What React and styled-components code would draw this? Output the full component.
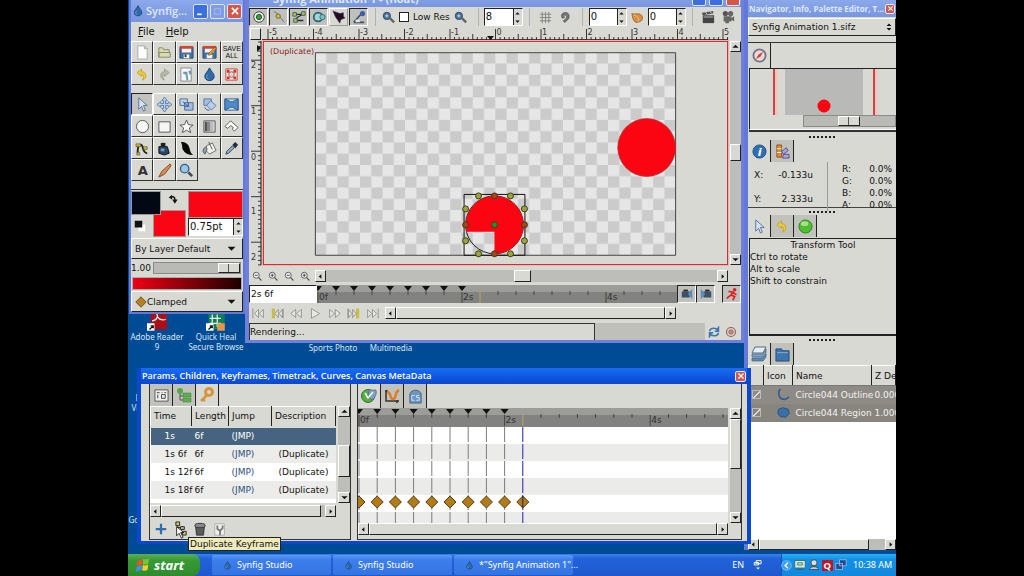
import React, { useState } from "react";
import styled, { createGlobalStyle, css } from "styled-components";

const GlobalStyle = createGlobalStyle`
    * {
        box-sizing: border-box;
    }

    body {
        margin: 0;
        background: #000;
        color: #111;
        font-family: "DejaVu Sans", "Noto Sans", sans-serif;
        font-size: 9px;
        line-height: 12px;
        overflow: hidden;
    }

    button, input, select {
        margin: 0;
        padding: 0;
        border: 0;
        border-radius: 0;
        background: none;
        color: inherit;
        font: inherit;
    }

    svg {
        display: block;
        flex: none;
    }
`

const raised = css`
    border: 1px solid;
    border-color: #fff #222 #222 #fff;
`

const sunken = css`
    border: 1px solid;
    border-color: #222 #fff #fff #222;
`

const Desktop = styled.main`
    position: relative;
    width: 75%;
    height: 100vh;
    margin: 0 auto;
    overflow: hidden;
    background: #004b96;
`

const Frame = styled.section`
    position: absolute;
    display: flex;
    flex-direction: column;
    background: #d9d9d3;
    overflow: hidden;
`

const ToolboxFrame = styled(Frame)`
    left: 1px;
    top: 0;
    width: 116px;
    border: solid #6478d8;
    border-width: 0 2px 2px;
`

const CanvasFrame = styled(Frame)`
    left: 117px;
    top: -9px;
    width: 500px;
    border: solid #6e80da;
    border-width: 0 4px 3px;
`

const DocksFrame = styled(Frame)`
    left: 616px;
    right: 0;
    top: 0;
    border-left: 4px solid #6478d8;
    white-space: nowrap;
`

const ParamsFrame = styled(Frame)`
    left: 9px;
    top: 368px;
    width: 614px;
    border: solid #0c47cf;
    border-width: 0 4px 3px;
`

const TitleBar = styled.header`
    display: flex;
    align-items: center;
    gap: ${(props) => props.$gap || 2}px;
    height: ${(props) => props.$height}px;
    flex: none;
    padding: 0 1px;
    color: ${(props) => (props.$active ? "#fff" : "#dfe8ff")};
    background: ${(props) => (props.$active ? "linear-gradient(#1a6cf4, #0b52dc 70%, #0c48cc)" : "linear-gradient(#8ba8ea, #7896e0)")};
    font-family: "Open Sans", "Noto Sans", sans-serif;
    font-size: ${(props) => props.$size || 9}px;
    font-weight: ${(props) => props.$weight || 700};
    line-height: 16px;
    white-space: nowrap;

    & h1 {
        flex: 1;
        margin: 0;
        font: inherit;
    }
`

const TitleButton = styled.button`
    display: grid;
    place-items: center;
    flex: none;
    width: ${(props) => props.$size || 15}px;
    height: ${(props) => props.$size || 15}px;
    border: 1px solid #dfe6fa;
    border-radius: 2px;
    color: #fff;
    background: ${(props) => (props.$close ? "#d2584a" : props.$dim ? "#7f9ce4" : "#3b6fe0")};
`

const Row = styled.div`
    display: flex;
    align-items: center;
`

const KeyframeActions = styled(Row)`
    padding-top: 3px;
`

const MenuBar = styled.nav`
    display: flex;
    gap: 11px;
    height: 19px;
    padding: 4px 7px;
    font-size: 10px;

    & button::first-letter {
        text-decoration: underline;
    }
`

const ToolGrid = styled.div`
    display: grid;
    grid-template-columns: repeat(5, 1fr);
    margin-bottom: ${(props) => props.$below || 0}px;
`

const ToolButton = styled.button`
    display: grid;
    place-items: center;
    height: 22px;
    border: 1px solid;
    border-color: ${(props) => (props.$on ? "#222 #fff #fff #222" : "#fff #333 #333 #fff")};
    background: ${(props) => (props.$on ? "#c2c2be" : "#d9d9d3")};
`

const SaveAll = styled.span`
    font-family: "Liberation Sans", sans-serif;
    font-size: 7px;
    line-height: 7px;
`

const ColorArea = styled.div`
    display: grid;
    grid-template-columns: 55px minmax(0, 1fr);
    gap: 2px;
    padding: 1px 0;
    border-top: 1px solid #333;
`

const Swatches = styled.div`
    display: grid;
    grid-template-columns: 22px 8px 25px;
    grid-template-rows: 19px 7px 20px;
`

const Swatch = styled.button`
    grid-area: ${(props) => props.$area};
    z-index: ${(props) => (props.$front ? 1 : 0)};
    height: ${(props) => props.$height || "auto"};
    border: 1px solid #999;
    background: ${(props) => props.$fill};
`

const Spin = styled.div`
    display: flex;
    width: ${(props) => (props.$width ? props.$width + "px" : "100%")};
    height: 18px;
    background: #fff;
    ${sunken}

    & input {
        flex: 1;
        min-width: 0;
        padding-left: 1px;
        font-size: 10px;
    }

    & div {
        display: grid;
        flex: none;
        width: 9px;
        background: #d9d9d3;
        border-left: 1px solid #222;
    }

    & button {
        display: grid;
        place-items: center;
    }
`

const Combo = styled.div`
    display: grid;
    grid-template-columns: auto 1fr 15px;
    align-items: center;
    height: 21px;
    padding-left: 3px;
    ${raised}

    & select {
        appearance: none;
        min-width: 0;
        outline: 0;
    }

    & svg {
        pointer-events: none;
    }
`

const OpacityRow = styled.label`
    display: grid;
    grid-template-columns: 22px 1fr;
    align-items: center;
    height: 18px;
    padding-right: 2px;
`

const Range = styled.input`
    appearance: none;
    display: block;
    width: 100%;
    height: 12px;
    background: #b9b9b5;
    border: 1px solid #8a8a86;

    &::-webkit-slider-thumb {
        appearance: none;
        width: 22px;
        height: 10px;
        border: 1px solid;
        border-color: #fff #222 #222 #fff;
        background: linear-gradient(90deg, #d9d9d3 9px, #555 9px, #555 10px, #d9d9d3 10px);
    }
`

const GradientButton = styled.button`
    height: 13px;
    margin: 0 1px 1px;
    border: 1px solid #aaa;
    background: linear-gradient(90deg, #f00013, #1c0000);
`

const Toolbar = styled.div`
    display: flex;
    align-items: center;
    height: 20px;
    gap: 1px;
    white-space: nowrap;
`

const Group = styled.div`
    display: flex;
    align-items: center;
    gap: ${(props) => props.$gap || 0}px;
    margin-left: ${(props) => props.$before || 0}px;
    padding-left: ${(props) => props.$inset || 0}px;
    height: 18px;
    border-left: 1px solid #b0b0ac;
`

const Toggle = styled.button`
    display: grid;
    place-items: center;
    width: 19px;
    height: 18px;
    background: ${(props) => (props.$off ? "#d9d9d3" : "#c0c0bc")};
    border: 1px solid;
    border-color: ${(props) => (props.$off ? "#fff #999 #999 #fff" : "#222 #fff #fff #222")};
`

const PlainButton = styled.button`
    display: grid;
    place-items: center;
    width: ${(props) => props.$width || 17}px;
    height: 17px;
`

const Check = styled.label`
    display: flex;
    align-items: center;
    gap: 4px;

    & input {
        appearance: none;
        width: 10px;
        height: 10px;
        border: 1px solid #222;
        background: #fff;
    }
`

const CanvasGrid = styled.div`
    display: grid;
    grid-template-columns: 13px 1fr 13px;
    grid-template-rows: 14px 224px;
    padding-bottom: 2px;

    & > svg {
        overflow: visible;
    }
`

const CornerButton = styled.button`
    margin: 1px;
    ${raised}
`

const WorkArea = styled.div`
    border: 1px solid #d23038;
    background: #d9d9d3;
    box-shadow: 0 0 0 1px #e9b4b0;
    margin-left: 1px;

    & svg {
        width: 100%;
        height: 222px;
    }
`

const Track = styled.div`
    display: flex;
    flex-direction: ${(props) => (props.$vertical ? "column" : "row")};
    flex: ${(props) => (props.$width ? "none" : "1")};
    width: ${(props) => (props.$width ? props.$width + "px" : "auto")};
    margin: ${(props) => (props.$vertical ? "0 0 0 2px" : "0")};
    min-height: 11px;
    background: #bdbdb9;
`

const ArrowButton = styled.button`
    display: grid;
    place-items: center;
    flex: 0 0 11px;
    background: #d9d9d3;
    ${raised}
`

const Thumb = styled.div`
    flex: ${(props) => props.$size};
    background: #d9d9d3;
    ${raised}
`

const Space = styled.div`
    flex: ${(props) => props.$size};
`

const TimeEntry = styled.input`
    width: 68px;
    height: 18px;
    padding-left: 1px;
    background: #fff;
    ${sunken}
`

const TimeStrip = styled.div`
    flex: 1;
    height: ${(props) => props.$height || 18}px;
    overflow: hidden;
    background: linear-gradient(#9c9c98 7px, #828280 7px);

    & svg {
        width: 100%;
    }
`

const StatusBar = styled.footer`
    display: grid;
    grid-template-columns: 346px 1fr 36px;
    height: 17px;
`

const StatusText = styled.output`
    padding-top: 2px;
    border: solid #333;
    border-width: 1px 1px 0 1px;
`

const Progress = styled.div`
    background: #c0c0bb;
`

const DocSelect = styled(Combo)`
    grid-template-columns: 1fr 10px;
    height: 18px;
    margin: 1px 0 6px;
`

const TabRow = styled.div`
    display: flex;
    height: ${(props) => props.$height || 22}px;
    border-top: ${(props) => (props.$line ? "1px solid #333" : "0")};
`

const Tab = styled.button`
    display: grid;
    place-items: center;
    width: 23px;
    background: ${(props) => (props.$on ? "#d9d9d3" : "#c2c2bd")};
    border-right: 1px solid #222;
`

const Grip = styled.div`
    width: 26px;
    height: 7px;
    margin: 0 auto;
    background: linear-gradient(90deg, #222 2px, transparent 2px) 0 3px / 4px 2px repeat-x;
`

const Preview = styled.div`
    height: 62px;
    border: solid #222;
    border-width: 1px 0 1px 1px;
    border-bottom-color: #fff;
    box-shadow: 0 2px #333;
    margin: 0 0 3px 1px;

    & svg {
        width: 100%;
        height: 46px;
    }

    & label {
        display: block;
        padding-left: 53px;
    }
`

const InfoPanel = styled.dl`
    display: grid;
    grid-template-columns: 80px 1fr;
    height: 46px;
    margin: 0;
    border-bottom: 1px solid #444;
`

const Readings = styled.div`
    display: grid;
    grid-template-columns: 1fr auto;
    align-content: start;
    row-gap: ${(props) => (props.$wide ? 12 : 0)}px;
    padding: ${(props) => (props.$wide ? "7px 14px 0 6px" : "1px 4px 0 14px")};
    border-right: ${(props) => (props.$wide ? "1px solid #999" : "0")};

    & dd {
        margin: 0;
        text-align: right;
    }
`

const ToolHelp = styled.div`
    height: 98px;
    margin: 1px 0 0 1px;
    border: solid #222;
    border-width: 1px 0 2px 1px;

    & h2 {
        margin: 0;
        font: inherit;
        text-align: center;
    }

    & p {
        margin: 0;
    }
`

const LayerArea = styled.div`
    height: 174px;
    background: #fff;
`

const DataTable = styled.table`
    width: 100%;
    border-collapse: collapse;
    table-layout: fixed;
    white-space: nowrap;

    & th {
        height: 20px;
        padding: 0 0 0 3px;
        background: #d9d9d3;
        border: 1px solid;
        border-color: #fff #222 #777 #fff;
        font-weight: 400;
        text-align: left;
    }

    & td {
        height: 18px;
        padding: 0 0 0 3px;
    }
`

const LayerTable = styled(DataTable)`
    & td {
        color: #f2f2ee;
        background: #8e8b86;
    }

    & tr:nth-child(2) td {
        background: #88857f;
    }

    & td:nth-child(2) svg {
        margin: 0 3px 0 auto;
    }

    & input {
        appearance: none;
        display: block;
        width: 9px;
        height: 9px;
        border: 1px solid #bbb;
        background: linear-gradient(135deg, transparent 45%, #ddd 45%, #ddd 60%, transparent 60%);
    }
`

const KeyframeTable = styled(DataTable)`
    & thead tr {
        border-bottom: 2px solid #d9d9d3;
    }

    & tbody tr:nth-child(even) {
        background: #ececea;
    }

    & tbody tr:first-child {
        color: #fff;
        background: #46647f;
    }

    & td:first-child {
        padding-left: 14px;
    }

    & td:last-child {
        padding-left: 7px;
    }

    & a {
        color: #2b5080;
        text-decoration: none;
    }

    & tr:first-child a {
        color: #fff;
    }
`

const Panels = styled.div`
    display: grid;
    grid-template-columns: 202px 1fr;
    gap: 6px;
    padding: 0 5px 1px 8px;
`

const Panel = styled.section`
    display: flex;
    flex-direction: column;
    height: 156px;
    border: solid #333;
    border-width: 0 1px 1px 1px;
`

const Split = styled.div`
    display: flex;
    height: ${(props) => props.$height}px;
`

const Body = styled.div`
    flex: 1;
    min-width: 0;
    background: #fff;
`

const TrackRows = styled.div`
    height: 96px;
    background: repeating-linear-gradient(#fff 0 17px, #ebebe9 17px 34px);

    & svg {
        width: 100%;
        height: 96px;
    }
`

const Tooltip = styled.div`
    position: absolute;
    left: 60px;
    top: 537px;
    padding: 0 1px;
    border: 1px solid #222;
    background: #efebbb;
    white-space: nowrap;
`

const Pointer = styled.div`
    position: absolute;
    left: 47px;
    top: 526px;
`

const Shortcut = styled.a`
    position: absolute;
    left: ${(props) => props.$x}px;
    top: ${(props) => props.$y}px;
    display: grid;
    justify-items: center;
    width: 64px;
    color: #dbe8f6;
    font-family: "Noto Sans", sans-serif;
    font-size: 8px;
    line-height: 10px;
    text-align: center;
    text-decoration: none;
    white-space: nowrap;
`

const Taskbar = styled.footer`
    position: absolute;
    left: 0;
    right: 0;
    bottom: 0;
    display: grid;
    grid-template-columns: 72px 1fr auto 111px;
    gap: 0 12px;
    align-items: stretch;
    height: 22px;
    color: #fff;
    background: linear-gradient(#3b82ee, #2262da 20%, #1f58ce);
    font-family: "Noto Sans", sans-serif;
`

const StartButton = styled.button`
    display: flex;
    align-items: center;
    gap: 4px;
    padding-left: 8px;
    border-radius: 0 8px 8px 0;
    background: linear-gradient(#5cae55, #379a35 30%, #2f8b2e);
    font-size: 13px;
    font-style: italic;
    font-weight: 700;
`

const Tasks = styled.div`
    display: grid;
    grid-template-columns: repeat(3, 119px);
    gap: 2px;
    padding: 1px 0;

    & button {
        display: flex;
        align-items: center;
        gap: 5px;
        padding-left: 11px;
        border-radius: 2px;
        background: linear-gradient(#5a98f6, #3c7eec 25%, #3474e2);
        white-space: nowrap;
    }
`

const Language = styled.div`
    display: flex;
    align-items: center;
    gap: 9px;
    padding-right: 10px;
`

const Tray = styled.div`
    display: flex;
    align-items: center;
    gap: 2px;
    margin-left: -4px;
    background: linear-gradient(#2fb0f4, #1290e6 25%, #1488dc);
    box-shadow: inset 1px 0 #0d59b5;

    & time {
        margin-left: 4px;
        white-space: nowrap;
    }
`

const art = {
    page: <path d="M3 1h7l3 3v11H3zM10 1v3h3" fill="#fdfdfb" stroke="#aaa" />,
    folder: <path d="M2 13V3h4l1 2h6v3M2 13V8h12v5z" fill="#d9dcb2" stroke="#858863" />,
    save: <><path d="M1 2h14v12H1z" fill="#466f9e" stroke="#294d78" /><path d="M1 1h14v3H1z" fill="#d14532" /><path d="M3 4h10v4H3zM5 10h6v4H5z" fill="#f5f5f5" /><path d="M6 10h2v3H6z" fill="#333" /></>,
    saveAs: <><path d="M1 2h14v12H1z" fill="#466f9e" stroke="#294d78" /><path d="M1 1h14v3H1z" fill="#d14532" /><path d="M3 4h10v4H3zM5 10h6v4H5z" fill="#f5f5f5" /><path d="M14 2 8 8l-1 3 3-1 5-6z" fill="#df9a38" stroke="#814714" strokeWidth=".6" /></>,
    undo: <path d="M8 14c5-1 5-9-1-9V2L2 6l5 4V8c2 0 3 3 1 6z" fill="#eccc30" stroke="#b79718" strokeWidth=".7" />,
    redo: <path d="M8 14C2 12 3 5 8 5V2l5 4-5 4V8c-2 0-3 3 0 6z" fill="#b5bfa8" stroke="#88907e" strokeWidth=".7" />,
    pageTool: <><path d="M2 1h11v14H2z" fill="#f7f7f7" stroke="#889" /><path d="M5 5h4v2l1 7H8L7 8 4 7zM10 4h3v4h-2z" fill="#6c9cae" /></>,
    drop: <><path d="M8 1c2 4 5 6 5 9 0 6-10 6-10 0 0-3 3-5 5-9z" fill="#2f69a9" stroke="#173f70" /><path d="M6 8c-2 3-1 4 1 5" stroke="#7aa8d8" /></>,
    buoy: <><path d="M2 2h12v12H2z" fill="#fbf4f0" stroke="#c8453a" /><path d="M3 3h3v3H3zM10 3h3v3h-3zM3 10h3v3H3zM10 10h3v3h-3z" fill="#cf3427" /><circle cx="8" cy="8" r="3" fill="#d9d9d3" stroke="#c8453a" /></>,
    pointer: <path d="M4 1v12l3-3 2 5 2-1-2-5h4z" fill="#d7e3f3" stroke="#54729c" />,
    move: <path d="M8 0l3 4H9v3h3V5l4 3-4 3V9H9v3h2l-3 4-3-4h2V9H4v2L0 8l4-3v2h3V4H5z" fill="#bcd2ee" stroke="#3f6a9f" strokeWidth=".8" />,
    scale: <><path d="M1 2h8v7H1z" fill="#c3d4ea" stroke="#4a6d9e" /><path d="M6 6h9v8H6z" fill="#a5bedc" stroke="#4a6d9e" /><path d="M4 5l6 5m0-4v4H6" stroke="#34578a" fill="none" /></>,
    rotate: <><path d="M2 2h8v7H2z" fill="#a5bedc" stroke="#5a7bab" /><path d="M9 4l6 5-5 5-5-5z" fill="#b7cce6" stroke="#5a7bab" /><path d="M3 11c1 3 3 3 5 3" stroke="#34578a" fill="none" /></>,
    mirror: <><path d="M1 2h14v12H1z" fill="#d5e3f2" stroke="#315d91" /><path d="M1 2l6 3h2l6-3v12l-6-3H7l-6 3z" fill="#4e8bc8" stroke="#315d91" /></>,
    circle: <circle cx="8" cy="8" r="6.500" fill="#f6f6f6" stroke="#555" />,
    square: <path d="M2 3h12v11H2z" fill="#f6f6f6" stroke="#555" />,
    star: <path d="M8 1l2 5 5 .5-4 3 1.500 5L8 12l-4.500 2.500L5 9.500l-4-3L6 6z" fill="#fbfbfb" stroke="#555" />,
    gradient: <><path d="M2 2h12v12H2z" fill="#ddd" stroke="#555" /><path d="M3 3h3v10H3z" fill="#555" /><path d="M6 3h3v10H6z" fill="#888" /><path d="M9 3h3v10H9z" fill="#bbb" /></>,
    polygon: <path d="M1 8l6-6 8 7-4 4-2-2 1-2-3-2-3 3z" fill="#fff" stroke="#555" />,
    spline: <><path d="M3 14C2 3 7 2 8 6c1 5 2 7 5 7" fill="none" stroke="#222" strokeWidth="2" /><path d="M1 3h5v3H1zM9 6h4v3H9zM2 12h3v3H2z" fill="#cbb528" stroke="#333" strokeWidth=".5" /></>,
    ink: <><path d="M4 2h5v4H4z" fill="#222" /><path d="M2 6h9l2 7-5 2-6-2z" fill="#28466a" stroke="#111" /><path d="M4 8h4v3H4z" fill="#7799bd" /></>,
    feather: <path d="M2 1c5 0 8 2 9 6 1 4 1 5 4 8-5 0-9-2-11-6C3 6 4 5 2 1z" fill="#090909" />,
    bucket: <><path d="M5 5l6-3 4 8-7 4-4-4z" fill="#f1f1ef" stroke="#666" /><path d="M7 1l4 8M2 8c2-3 4-1 3 2l-2 4-2-3z" fill="#8da4b9" stroke="#555" /></>,
    dropper: <><path d="M9 4l3-3 3 3-3 4z" fill="#222d3d" /><path d="M9 5l2 2-6 6-3 1 1-3z" fill="#91acc4" stroke="#34485e" /></>,
    letter: <text x="3" y="13" fill="#333" fontSize="14" fontWeight="700">A</text>,
    pencil: <path d="M14 1l-9 8-3 6 6-3 7-9z" fill="#d88c50" stroke="#814a27" />,
    lens: <><circle cx="6" cy="6" r="4.500" fill="#9dc5e6" stroke="#375f8b" strokeWidth="1.500" /><path d="M10 10l4 4" stroke="#434c58" strokeWidth="3" /></>,
    swap: <path d="M1 5l5-4v2c4 0 5 2 5 5h3l-4 6-4-6h3c0-2-1-3-3-3v3z" fill="#161616" />,
    reset: <><path d="M6 6h9v9H6z" fill="#fff" /><path d="M1 1h10v9H1z" fill="#111" /></>,
    diamond: <path d="M8 1l7 7-7 7-7-7z" fill="#b58122" stroke="#5b3b0e" />,
    target: <><circle cx="8" cy="8" r="6" fill="#eee" stroke="#333" /><circle cx="8" cy="8" r="3" fill="#3a9e3c" stroke="#145217" /></>,
    tangent: <><path d="M2 2c5 1 6 5 12 12" fill="none" stroke="#666" /><circle cx="7" cy="7" r="2.500" fill="#cbbd48" stroke="#6b6426" /></>,
    vertex: <><path d="M3 5h9C9 8 4 7 5 12h8" fill="none" stroke="#1f3045" strokeWidth="1.500" /><path d="M1 3h4v4H1zM11 2h4v4h-4zM2 10h4v4H2z" fill="#c8c24b" stroke="#2e5a50" /></>,
    radius: <><circle cx="7" cy="8" r="5" fill="#a4d6d5" stroke="#25656d" strokeWidth="2" /><circle cx="12" cy="8" r="3" fill="#86bfc4" stroke="#25656d" /></>,
    widthHandle: <path d="M1 1l8 3 4-1v4l2 2-5 2-1 4-5-7z" fill="#1c1020" stroke="#612c60" strokeWidth=".7" />,
    angle: <><path d="M2 14h12M2 14L11 4" stroke="#445066" strokeWidth="2" /><circle cx="12" cy="4" r="3" fill="#3e5fa8" /><path d="M4 11h5v3H4z" fill="#dfe3ea" /></>,
    refine: <><circle cx="6" cy="6" r="4.500" fill="#4d7296" stroke="#263f5b" /><path d="M10 9l5 5" stroke="#60666b" strokeWidth="3" /><path d="M4 6h4M6 4v4" stroke="#dce7f2" /></>,
    grid: <path d="M1 4h14M1 8h14M1 12h14M4 1v14M8 1v14M12 1v14" stroke="#777" fill="none" />,
    magnet: <path d="M4 9C0 2 10 0 12 4c2 5-2 8-5 10l-2-2c4-2 5-5 4-6-2-2-4-1-2 2z" fill="#777" stroke="#444" strokeWidth=".7" />,
    onion: <><path d="M1 3c6 2 10-2 13 4 1 5-3 7-8 7-4-2-4-7-5-11z" fill="#d69045" stroke="#9b5e25" /><path d="M3 5c4 1 8 3 6 8" stroke="#f0c68c" /></>,
    clap: <><path d="M2 6h13v9H2z" fill="#444" /><path d="M1 3l13-2v3L2 6z" fill="#555" /><path d="M5 2l2 3M10 1l2 3M3 8h11" stroke="#ccc" /></>,
    camera: <><circle cx="5" cy="4" r="3" fill="#555" /><circle cx="11" cy="4" r="3" fill="#666" /><path d="M3 7h9v6H3zM12 9l3-2v6l-3-2zM5 13h4v2H5z" fill="#666" /></>,
    zoomOut: <><circle cx="7" cy="7" r="4" fill="#eee" stroke="#555" strokeWidth="1.200" /><path d="M10 10l4 4M5 7h4" stroke="#555" strokeWidth="1.500" /></>,
    zoomIn: <><circle cx="7" cy="7" r="4" fill="#eee" stroke="#555" strokeWidth="1.200" /><path d="M10 10l4 4M5 7h4M7 5v4" stroke="#555" strokeWidth="1.500" /></>,
    lockPast: <><path d="M2 5h9v7H2z" fill="#3d5066" /><path d="M4 3h5v2H4z" fill="#222" /><path d="M14 2v12L9 8z" fill="#5b8bbb" /></>,
    lockFuture: <><path d="M5 5h9v7H5z" fill="#3d5066" /><path d="M7 3h5v2H7z" fill="#222" /><path d="M2 2v12l5-6z" fill="#5b8bbb" /></>,
    runner: <><circle cx="11" cy="3" r="2" fill="#e02020" /><path d="M10 5L7 9l4 2-2 4M7 9l-5 4M4 5l5 1 4 3" stroke="#e02020" strokeWidth="2" fill="none" /></>,
    refresh: <path d="M2 7c1-5 8-5 10-2l2-3v5H9M14 9c-1 5-8 5-10 2l-2 3V9h5" fill="none" stroke="#3d77b1" strokeWidth="2" />,
    stop: <><circle cx="8" cy="8" r="6" fill="#ddd0c8" stroke="#8f625a" strokeWidth="1.500" /><circle cx="8" cy="8" r="3" fill="#b98d84" stroke="#9a6158" /></>,
    compass: <><circle cx="8" cy="8" r="6.500" fill="#ecdad6" stroke="#75758a" strokeWidth="2" /><path d="M12 4L9 9l-5 3 3-5z" fill="#ce3d35" /></>,
    info: <><circle cx="8" cy="8" r="7" fill="#2f70b5" stroke="#1f4f86" /><text x="6" y="13" fill="#fff" fontSize="12" fontStyle="italic" fontWeight="700">i</text></>,
    palette: <><path d="M2 1h5v13H2z" fill="#e48b2d" stroke="#8d5124" /><path d="M2 5h5M2 9h5" stroke="#fff" /><path d="M7 8l5-4 2 3-5 4zM9 11h6v4H8z" fill="#a9a8cc" stroke="#5a4a90" /></>,
    ball: <><circle cx="8" cy="8" r="7" fill="#50bd35" stroke="#2c8420" /><ellipse cx="7" cy="5" rx="4" ry="2.500" fill="#a6e47f" /></>,
    layers: <><path d="M4 1h11l-3 6H1z" fill="#e8eef5" stroke="#526c88" /><path d="M1 8h11l3-5v4l-3 4H1z" fill="#7fa2c5" stroke="#45617e" strokeWidth=".7" /><path d="M1 12h11l3-4v3l-3 4H1z" fill="#5f88b2" stroke="#45617e" strokeWidth=".7" /></>,
    blueFolder: <><path d="M1 2h6l1 2h7v11H1z" fill="#3e75ad" stroke="#244c79" /><path d="M2 6h12" stroke="#86aed4" /></>,
    outline: <path d="M4 1C0 7 3 14 9 14c3 0 4-2 6-3" fill="none" stroke="#325d8e" strokeWidth="2" />,
    region: <path d="M2 4l5-2 7 2 1 5-4 5-7-1-3-4z" fill="#386fa8" stroke="#234e7f" />,
    params: <><path d="M1 2h14v12H1z" fill="#eee" stroke="#555" /><path d="M3 5h3M8 5h1M11 5h2M4 7v4M8 7h4v4H8z" stroke="#444" fill="none" /></>,
    children: <><circle cx="4" cy="4" r="3" fill="#56a846" /><path d="M4 7v6h4M4 9h3" stroke="#555" fill="none" /><path d="M7 6h8v4H7zM7 11h8v4H7z" fill="#5fad4e" stroke="#397d30" strokeWidth=".5" /></>,
    key: <><circle cx="10" cy="5" r="3.500" fill="none" stroke="#d9943b" strokeWidth="3" /><path d="M8 8l-6 6M4 12l2 2" stroke="#d9943b" strokeWidth="2.500" /></>,
    clock: <><circle cx="7" cy="8" r="6.500" fill="#55ae3d" stroke="#376c48" /><path d="M8 2h7c1 4-1 8-4 10L7 8z" fill="#7f9fc4" stroke="#4a6583" strokeWidth=".7" /><path d="M4 5l3 5 5-6" stroke="#fff" strokeWidth="1.500" fill="none" /></>,
    curve: <><path d="M2 2v11h13M1 3h3M13 12v3" stroke="#333" strokeWidth="1.500" fill="none" /><path d="M3 4c5 0 2 7 6 7 4 0 1-7 6-9" stroke="#df7c29" strokeWidth="2.500" fill="none" /></>,
    meta: <><path d="M2 15V5c2-5 10-5 12 0v10z" fill="#6b97c1" stroke="#3f6489" /><path d="M7 7H4v5h3M12 7H9v2h3v3H9" stroke="#d4e4f4" fill="none" /></>,
    plus: <path d="M8 1v14M1 8h14" stroke="#326eaf" strokeWidth="3" />,
    duplicate: <><path d="M4 3v10h6M4 7h4" stroke="#222" fill="none" /><path d="M2 1h4v4H2zM7 6h4v3H7zM9 11h4v4H9z" fill="#cec373" stroke="#222" /></>,
    trash: <><path d="M3 5h10l-1 10H4z" fill="#5c5c58" stroke="#333" /><ellipse cx="8" cy="4" rx="6" ry="2.500" fill="#888" stroke="#333" /></>,
    property: <><path d="M2 2h11v13H2z" fill="#efefeb" stroke="#aaa" /><path d="M5 4v4l3 2 3-3V4M8 10v5" stroke="#777" fill="none" strokeWidth="2" /></>,
    flag: <><path d="M2 3l5-2v6L1 9z" fill="#f05028" /><path d="M8 1c3 1 4 0 7 0l-1 6c-3 0-4 1-6 0z" fill="#7bc334" /><path d="M1 10l6-2-1 6-6 1z" fill="#4b8cf0" /><path d="M8 8c2 1 4 0 6 0l-1 6c-2 0-4 1-6 0z" fill="#f8ce2f" /></>,
    pdf: <><path d="M3 1h13v13H3z" fill="#a91018" /><path d="M4 7c4 0 5-4 4-5 0 3 3 5 7 4" fill="none" stroke="#fff" /><path d="M0 9h6v6H0z" fill="#fff" /><path d="M2 14l3-3M3 11h2v2" stroke="#111" /></>,
    heal: <><path d="M2 1h13v13H2z" fill="#0e7e58" /><path d="M5 2v10M9 2v10M3 5h9M3 9h9" stroke="#e3f5df" /><path d="M9 9h6v6H9z" fill="#e99649" /><path d="M0 9h6v6H0z" fill="#fff" /><path d="M2 14l3-3M3 11h2v2" stroke="#111" /></>,
    back: <><circle cx="8" cy="8" r="7" fill="#3c9df0" stroke="#94d0fa" /><path d="M10 4L6 8l4 4" stroke="#fff" fill="none" strokeWidth="2" /></>,
    device: <><path d="M1 2h14v10H1z" fill="#cceadb" stroke="#315f54" /><path d="M5 5h6v3H5zM4 14h8" stroke="#315f54" fill="none" /></>,
    person: <><circle cx="8" cy="5" r="4" fill="#ddd" stroke="#333" /><path d="M2 14c0-5 12-5 12 0z" fill="#ccc" stroke="#333" /></>,
    quick: <><path d="M0 0h16v16H0z" fill="#c21524" /><text x="2" y="13" fill="#fff" fontSize="14" fontWeight="700">Q</text></>,
    network: <path d="M6 1h9v8H6zM1 6h9v8H1z" fill="#244a92" stroke="#a8c2e8" />,
    restore: <><path d="M5 1h8v5H5zM2 4h7v4H2z" fill="#2a66dc" stroke="#fff" strokeWidth="1.500" /><path d="M5 12h6l-3 3z" fill="#fff" /></>,
    cross: <path d="M3 3l10 10M13 3L3 13" stroke="#fff" strokeWidth="2.500" />,
    minimise: <path d="M2 13h8" stroke="#fff" strokeWidth="3" />,
    maximise: <path d="M3 3h10v10H3z" fill="none" stroke="#a9bff0" strokeWidth="1.500" />,
    left: <path d="M10 3v10L4 8z" fill="#111" />,
    right: <path d="M6 3v10l6-5z" fill="#111" />,
    up: <path d="M1 11h14L8 4z" fill="#111" />,
    down: <path d="M1 5h14l-7 7z" fill="#111" />,
    both: <path d="M3 6h10L8 1zM3 10h10l-5 5z" fill="#111" />,
    first: <path d="M1 2v12M3 8l5-5v10zM9 8l5-5v10z" fill="#e8e8e3" stroke="#888" />,
    prevKey: <><path d="M1 2h4v12H1z" fill="#cabd45" /><path d="M5 8l4-5v10zM10 8l4-5v10zM15 2v12" fill="#e8e8e3" stroke="#888" /></>,
    prev: <path d="M1 8l6-5v10zM8 8l6-5v10z" fill="#e8e8e3" stroke="#888" />,
    play: <path d="M3 2l10 6-10 6z" fill="#e8e8e3" stroke="#888" />,
    next: <path d="M2 3l6 5-6 5zM9 3l6 5-6 5z" fill="#e8e8e3" stroke="#888" />,
    nextKey: <><path d="M11 2h4v12h-4z" fill="#cabd45" /><path d="M2 3l4 5-4 5zM7 3l4 5-4 5zM1 2v12" fill="#e8e8e3" stroke="#888" /></>,
    last: <path d="M15 2v12M2 3l5 5-5 5zM8 3l5 5-5 5z" fill="#e8e8e3" stroke="#888" />,
    mouse: <path d="M2 1v11l3-3 3 6 2-1-3-6h4z" fill="#fff" stroke="#111" />,
}

const Icon = ({ name, size = 16 }) => (
    <svg width={size} height={size} viewBox="0 0 16 16" fill="none" aria-hidden="true">{art[name]}</svg>
)

const fileTools = ["page", "folder", "save", "saveAs", "saveAll", "undo", "redo", "pageTool", "drop", "buoy"];
const drawTools = ["pointer", "move", "scale", "rotate", "mirror", "circle", "square", "star", "gradient", "polygon", "spline", "ink", "feather", "bucket", "dropper", "letter", "pencil", "lens"];
const handleToggles = ["target", "tangent", "vertex", "radius", "widthHandle", "angle"];
const playButtons = ["first", "prevKey", "prev", "play", "next", "nextKey", "last"];
const layers = [
    { icon: "outline", name: "Circle044 Outline", depth: "0.000" },
    { icon: "region", name: "Circle044 Region", depth: "1.000" },
];
const keyframes = [
    { time: "1s", length: "6f", description: "" },
    { time: "1s 6f", length: "6f", description: "(Duplicate)" },
    { time: "1s 12f", length: "6f", description: "(Duplicate)" },
    { time: "1s 18f", length: "6f", description: "(Duplicate)" },
];
const range = (count) => Array.from({ length: count }, (_, index) => index);

const SpinBox = ({ label, value, width }) => (
    <Spin $width={width}>
        <input type="text" aria-label={label} defaultValue={value} />
        <div>
            <button aria-label={`${label} up`}><Icon name="up" size={5} /></button>
            <button aria-label={`${label} down`}><Icon name="down" size={5} /></button>
        </div>
    </Spin>
)

const ScrollBar = ({ vertical, before, thumb, after, width }) => (
    <Track $vertical={vertical} $width={width}>
        <ArrowButton aria-label="Scroll back"><Icon name={vertical ? "up" : "left"} size={7} /></ArrowButton>
        <Space $size={before} />
        <Thumb $size={thumb} />
        <Space $size={after} />
        <ArrowButton aria-label="Scroll forward"><Icon name={vertical ? "down" : "right"} size={7} /></ArrowButton>
    </Track>
)

const Toolbox = () => (
    <ToolboxFrame>
        <TitleBar $height={22} $size={11} $weight={600}>
            <Icon name="drop" size={12} />
            <h1>Synfig...</h1>
            <TitleButton aria-label="Minimise"><Icon name="minimise" size={9} /></TitleButton>
            <TitleButton aria-label="Maximise" $dim><Icon name="maximise" size={9} /></TitleButton>
            <TitleButton aria-label="Close" $close><Icon name="cross" size={10} /></TitleButton>
        </TitleBar>
        <MenuBar>
            <button>File</button>
            <button>Help</button>
        </MenuBar>
        <ToolGrid $below={8}>
            {fileTools.map((tool) => (
                <ToolButton key={tool} aria-label={tool}>
                    {tool === "saveAll" ? <SaveAll>SAVE<br />ALL</SaveAll> : <Icon name={tool} size={15} />}
                </ToolButton>
            ))}
        </ToolGrid>
        <ToolGrid $below={8}>
            {drawTools.map((tool) => (
                <ToolButton key={tool} aria-label={tool} $on={tool === "pointer"}><Icon name={tool} size={15} /></ToolButton>
            ))}
        </ToolGrid>
        <ColorArea>
            <Swatches>
                <Swatch aria-label="Outline colour" $area="1 / 1 / 3 / 3" $front $height="24px" $fill="#020814" />
                <PlainButton aria-label="Swap colours" $width={24}><Icon name="swap" size={11} /></PlainButton>
                <Swatch aria-label="Fill colour" $area="2 / 2 / 4 / 4" $fill="#fa0514" />
                <PlainButton aria-label="Reset colours"><Icon name="reset" size={12} /></PlainButton>
            </Swatches>
            <div>
                <Swatch as="div" $height="27px" $fill="#fa0514" />
                <SpinBox label="Brush width" value="0.75pt" />
            </div>
        </ColorArea>
        <Combo>
            <span />
            <select aria-label="Blend method"><option>By Layer Default</option></select>
            <Icon name="down" size={9} />
        </Combo>
        <OpacityRow>
            1.00
            <Range type="range" aria-label="Opacity" defaultValue="100" />
        </OpacityRow>
        <GradientButton aria-label="Default gradient" />
        <Combo>
            <Icon name="diamond" size={12} />
            <select aria-label="Interpolation"><option>Clamped</option></select>
            <Icon name="down" size={9} />
        </Combo>
    </ToolboxFrame>
)

const HorizontalRuler = () => (
    <svg width="100%" height="14" viewBox="0 0 466 14" preserveAspectRatio="none">
        <path d="M0 13h466" stroke="#111" strokeWidth="1.500" />
        {range(102).map((i) => {
            const x = 6 + i * 4.55;
            return <path key={i} d={`M${x} ${i % 10 === 0 ? 2 : i % 5 === 0 ? 7 : 10}V13`} stroke="#222" strokeWidth=".9" />;
        })}
        {range(11).map((i) => <text key={i} x={7 + i * 45.5} y="8" fontSize="8" fill="#333">{i - 5}</text>)}
        <path d="M225 9h7l-3.500 4z" fill="#111" />
    </svg>
)

const VerticalRuler = () => (
    <svg width="13" height="224" viewBox="0 0 13 224">
        <path d="M12 0v224" stroke="#111" />
        {range(50).map((i) => <path key={i} d={`M${i % 10 === 4 ? 2 : 9} ${i * 4.55 + 1}H12`} stroke="#222" strokeWidth=".9" />)}
        {[[27, "2"], [73, "1"], [119, "0"], [173, "1"], [219, "2"]].map(([y, label]) => (
            <text key={y} x="2" y={y} fontSize="8" fill="#333">{label}</text>
        ))}
        <path d="M8 4v7l4-4z" fill="#111" />
    </svg>
)

const handles = [
    [215, 154], [231, 154, 1], [247, 154], [202, 167], [261, 167], [202, 183, 1], [261, 183, 1],
    [202, 199], [261, 199], [215, 212], [231, 212, 1], [247, 212],
];

const Drawing = () => (
    <svg viewBox="0 0 464 222" preserveAspectRatio="xMidYMid meet">
        <defs>
            <pattern id="checks" x="51" y="10" width="22.600" height="22.600" patternUnits="userSpaceOnUse">
                <path d="M0 0h22.600v22.600H0z" fill="#e6e6e6" />
                <path d="M11.300 0h11.300v11.300H11.300zM0 11.300h11.300v11.300H0z" fill="#cbcbcb" />
            </pattern>
        </defs>
        <path d="M51.500 10.500h361v203h-361z" fill="url(#checks)" stroke="#444" />
        <circle cx="383.500" cy="105.500" r="29" fill="#fb0512" stroke="#a03a3a" strokeWidth=".7" />
        <circle cx="231" cy="183" r="29" fill="none" stroke="#222" />
        <path d="M231 190v22a29 29 0 1 0-28-22z" fill="#fb0512" />
        <path d="M200.500 152.500h61v61h-61z" fill="none" stroke="#111" />
        {handles.map(([x, y, red]) => (
            <circle key={`${x}-${y}`} cx={x} cy={y} r="3" fill={red ? "#b0401c" : "#9aa53c"} stroke="#3b3f16" />
        ))}
        <circle cx="231" cy="183" r="3" fill="#2c8a2c" stroke="#3b3f16" />
        <text x="6" y="12" fontSize="8" fill="#8a1c24">(Duplicate)</text>
    </svg>
)

const TimeRuler = ({ width, start, step, keys = 9 }) => (
    <svg height="20" viewBox={`0 0 ${width} 20`} preserveAspectRatio="xMinYMin slice">
        {range(21).map((i) => (
            <path key={i} d={`M${start + i * step} ${i % 8 === 0 ? 7 : 6}v${i % 8 === 0 ? 11 : i === 9 ? 12 : 4}`} stroke={i === 9 ? "#c8ae50" : "#333"} strokeWidth=".8" />
        ))}
        {range(keys).map((i) => <path key={i} d={`M${start + i * step - 4} 1h8l-4 5z`} fill="#111" />)}
        {["0f", "2s", "4s"].map((label, i) => (
            <text key={label} x={start + 1 + i * step * 8} y="15" fontSize="9" fill="#333">{label}</text>
        ))}
    </svg>
)

const CanvasWindow = () => (
    <CanvasFrame>
        <TitleBar $height={16} $size={11} $gap={3}>
            <Space $size="0 0 20px" />
            <h1>Synfig Animation 1 - (float)</h1>
            <TitleButton aria-label="Minimise" $size={14} />
            <TitleButton aria-label="Maximise" $size={14} />
            <TitleButton aria-label="Close" $close $size={14} />
        </TitleBar>
        <Toolbar>
            {handleToggles.map((name) => (
                <Toggle key={name} aria-label={name} $off={name === "widthHandle"}><Icon name={name} size={14} /></Toggle>
            ))}
            <Group $before={6} $inset={4} $gap={2}>
                <PlainButton aria-label="Decrease resolution"><Icon name="refine" size={13} /></PlainButton>
                <Check><input type="checkbox" /> Low Res</Check>
                <PlainButton aria-label="Increase resolution"><Icon name="refine" size={13} /></PlainButton>
            </Group>
            <Group $before={8} $inset={5}><SpinBox label="Quality" value="8" width={39} /></Group>
            <Group $before={5} $inset={7} $gap={3}>
                <PlainButton aria-label="Show grid"><Icon name="grid" size={13} /></PlainButton>
                <PlainButton aria-label="Snap to grid"><Icon name="magnet" size={13} /></PlainButton>
            </Group>
            <Group $before={7} $inset={6} $gap={1}>
                <SpinBox label="Past onion skins" value="0" width={38} />
                <PlainButton aria-label="Onion skin" $width={19}><Icon name="onion" size={13} /></PlainButton>
                <SpinBox label="Future onion skins" value="0" width={38} />
            </Group>
            <Group $before={5} $inset={7} $gap={3}>
                <PlainButton aria-label="Render"><Icon name="clap" size={14} /></PlainButton>
                <PlainButton aria-label="Preview"><Icon name="camera" size={14} /></PlainButton>
            </Group>
        </Toolbar>
        <CanvasGrid>
            <CornerButton aria-label="Canvas menu" />
            <HorizontalRuler />
            <span />
            <VerticalRuler />
            <WorkArea><Drawing /></WorkArea>
            <ScrollBar vertical before={93} thumb={15} after={94} />
        </CanvasGrid>
        <Split $height={18}>
            {["zoomOut", "zoomIn", "zoomOut", "zoomIn"].map((name, i) => (
                <PlainButton key={i} aria-label={`Zoom ${i}`} $width={16}><Icon name={name} size={12} /></PlainButton>
            ))}
            <Space $size="0 0 2px" />
            <Row>
                <Split $height={12}><ScrollBar width={413} before={188} thumb={15} after={186} /></Split>
            </Row>
        </Split>
        <Split $height={18}>
            <TimeEntry aria-label="Current time" defaultValue="2s 6f" />
            <TimeStrip><TimeRuler width={360} start={1} step={18} /></TimeStrip>
            <Toggle aria-label="Lock past keyframes"><Icon name="lockPast" size={14} /></Toggle>
            <Toggle aria-label="Lock future keyframes"><Icon name="lockFuture" size={14} /></Toggle>
            <Space $size="0 0 7px" />
            <Toggle aria-label="Animate mode"><Icon name="runner" size={14} /></Toggle>
        </Split>
        <Split $height={20}>
            <Row>
                {playButtons.map((name) => (
                    <PlainButton key={name} aria-label={name} $width={19}><Icon name={name} size={13} /></PlainButton>
                ))}
            </Row>
            <Space $size="0 0 3px" />
            <Row><Split $height={12}><ScrollBar width={291} before={0} thumb={1} after={0} /></Split></Row>
        </Split>
        <StatusBar>
            <StatusText>Rendering...</StatusText>
            <Progress />
            <Row>
                <PlainButton aria-label="Refresh"><Icon name="refresh" size={12} /></PlainButton>
                <PlainButton aria-label="Stop"><Icon name="stop" size={12} /></PlainButton>
            </Row>
        </StatusBar>
    </CanvasFrame>
)

const Docks = () => (
    <DocksFrame>
        <TitleBar $height={17} $size={8} $gap={1}>
            <h1>Navigator, Info, Palette Editor, T...</h1>
            <TitleButton aria-label="Close" $close $size={10}><Icon name="cross" size={7} /></TitleButton>
        </TitleBar>
        <DocSelect>
            <select aria-label="Open canvas"><option>Synfig Animation 1.sifz</option></select>
            <Icon name="both" size={8} />
        </DocSelect>
        <TabRow $line $height={26}><Tab $on aria-label="Navigator"><Icon name="compass" size={15} /></Tab></TabRow>
        <Preview>
            <svg viewBox="0 0 147 46" preserveAspectRatio="xMinYMin slice">
                <path d="M35 0h78v46H35z" fill="#b9b9b7" />
                <path d="M26 0v46M126 0v46" stroke="#f2c4ba" strokeWidth="3" />
                <path d="M24 0v46M124 0v46" stroke="#c3161c" strokeWidth="1.500" />
                <circle cx="74" cy="37" r="6.500" fill="#fb0512" />
            </svg>
            <label><Range type="range" aria-label="Zoom" defaultValue="49" /></label>
        </Preview>
        <Grip />
        <TabRow>
            <Tab $on aria-label="Info"><Icon name="info" size={15} /></Tab>
            <Tab aria-label="Palette"><Icon name="palette" size={15} /></Tab>
        </TabRow>
        <InfoPanel>
            <Readings $wide>
                <dt>X:</dt><dd>-0.133u</dd>
                <dt>Y:</dt><dd>2.333u</dd>
            </Readings>
            <Readings>
                {["R:", "G:", "B:", "A:"].map((channel) => (
                    <React.Fragment key={channel}><dt>{channel}</dt><dd>0.0%</dd></React.Fragment>
                ))}
            </Readings>
        </InfoPanel>
        <Grip />
        <TabRow>
            <Tab $on aria-label="Tool options"><Icon name="pointer" size={15} /></Tab>
            <Tab aria-label="History"><Icon name="undo" size={15} /></Tab>
            <Tab aria-label="Groups"><Icon name="ball" size={15} /></Tab>
        </TabRow>
        <ToolHelp>
            <h2>Transform Tool</h2>
            <p>Ctrl to rotate</p>
            <p>Alt to scale</p>
            <p>Shift to constrain</p>
        </ToolHelp>
        <Grip />
        <TabRow>
            <Tab $on aria-label="Layers"><Icon name="layers" size={16} /></Tab>
            <Tab aria-label="Canvases"><Icon name="blueFolder" size={15} /></Tab>
        </TabRow>
        <LayerArea>
            <LayerTable>
                <colgroup><col width="15" /><col width="29" /><col width="79" /><col /></colgroup>
                <thead><tr><th aria-label="Visible" /><th>Icon</th><th>Name</th><th>Z Depth</th></tr></thead>
                <tbody>
                    {layers.map((layer) => (
                        <tr key={layer.name}>
                            <td><input type="checkbox" aria-label={layer.name} defaultChecked /></td>
                            <td><Icon name={layer.icon} size={13} /></td>
                            <td>{layer.name}</td>
                            <td>{layer.depth}</td>
                        </tr>
                    ))}
                </tbody>
            </LayerTable>
        </LayerArea>
        <Split $height={11}><ScrollBar before={0} thumb={109} after={16} /></Split>
    </DocksFrame>
)

const ParamsWindow = () => {
    const [selected] = useState(0);

    return (
        <ParamsFrame>
            <TitleBar $active $height={16} $weight={600}>
                <h1>Params, Children, Keyframes, Timetrack, Curves, Canvas MetaData</h1>
                <TitleButton aria-label="Close" $close $size={11}><Icon name="cross" size={8} /></TitleButton>
            </TitleBar>
            <Panels>
                <Panel>
                    <TabRow>
                        <Tab aria-label="Params"><Icon name="params" size={15} /></Tab>
                        <Tab aria-label="Children"><Icon name="children" size={16} /></Tab>
                        <Tab $on aria-label="Keyframes"><Icon name="key" size={16} /></Tab>
                    </TabRow>
                    <Split $height={97}>
                        <Body>
                            <KeyframeTable>
                                <colgroup><col width="41" /><col width="37" /><col width="43" /><col /></colgroup>
                                <thead><tr><th>Time</th><th>Length</th><th>Jump</th><th>Description</th></tr></thead>
                                <tbody>
                                    {keyframes.map((frame, i) => (
                                        <tr key={frame.time} aria-selected={i === selected}>
                                            <td>{frame.time}</td>
                                            <td>{frame.length}</td>
                                            <td><a href="#jump">(JMP)</a></td>
                                            <td>{frame.description}</td>
                                        </tr>
                                    ))}
                                </tbody>
                            </KeyframeTable>
                        </Body>
                        <ScrollBar vertical width={12} before={29} thumb={31} after={15} />
                    </Split>
                    <Space $size="0 0 2px" />
                    <Split $height={12}><ScrollBar width={186} before={0} thumb={160} after={4} /></Split>
                    <KeyframeActions>
                        <PlainButton aria-label="Add keyframe" $width={22}><Icon name="plus" size={12} /></PlainButton>
                        <PlainButton aria-label="Duplicate keyframe" $width={18}><Icon name="duplicate" size={15} /></PlainButton>
                        <PlainButton aria-label="Remove keyframe" $width={20}><Icon name="trash" size={14} /></PlainButton>
                        <PlainButton aria-label="Keyframe properties" $width={20}><Icon name="property" size={14} /></PlainButton>
                    </KeyframeActions>
                </Panel>
                <Panel>
                    <TabRow $height={24}>
                        <Tab $on aria-label="Timetrack"><Icon name="clock" size={16} /></Tab>
                        <Tab aria-label="Curves"><Icon name="curve" size={16} /></Tab>
                        <Tab aria-label="Canvas metadata"><Icon name="meta" size={15} /></Tab>
                    </TabRow>
                    <Split $height={115}>
                        <Body>
                            <TimeStrip $height={19}><TimeRuler width={370} start={1} step={18.2} /></TimeStrip>
                            <TrackRows>
                                <svg viewBox="0 0 370 96" preserveAspectRatio="xMinYMin slice">
                                    {range(10).map((i) => (
                                        <g key={i}>
                                            <path d={`M${1 + i * 18.2} 0v96`} stroke={i === 9 ? "#2222b0" : "#7c7c78"} strokeDasharray="15 2" />
                                            <path d={`M${1 + i * 18.2} 69l6 6-6 6-6-6z`} fill="#b07c18" stroke="#5b3b0e" />
                                        </g>
                                    ))}
                                    <path d="M164.800 69v12" stroke="#2a2060" />
                                </svg>
                            </TrackRows>
                        </Body>
                        <ScrollBar vertical width={11} before={0} thumb={50} after={44} />
                    </Split>
                    <Split $height={12}><ScrollBar width={370} before={0} thumb={1} after={0} /></Split>
                </Panel>
            </Panels>
        </ParamsFrame>
    );
}

const App = () => (
    <>
        <GlobalStyle />
        <Desktop>
            <Shortcut href="#reader" $x={-3} $y={312}><Icon name="pdf" size={20} />Adobe Reader<br />9</Shortcut>
            <Shortcut href="#heal" $x={56} $y={312}><Icon name="heal" size={20} />Quick Heal<br />Secure Browse</Shortcut>
            <Shortcut href="#photo" $x={173} $y={343}>Sports Photo</Shortcut>
            <Shortcut href="#media" $x={231} $y={343}>Multimedia</Shortcut>
            <Shortcut href="#player" $x={-18} $y={393}>Flip<br />Video</Shortcut>
            <Shortcut href="#google" $x={-18} $y={515}>Google</Shortcut>
            <Toolbox />
            <CanvasWindow />
            <Docks />
            <ParamsWindow />
            <Tooltip role="tooltip">Duplicate Keyframe</Tooltip>
            <Pointer><Icon name="mouse" size={13} /></Pointer>
            <Taskbar>
                <StartButton><Icon name="flag" size={14} />start</StartButton>
                <Tasks>
                    <button><Icon name="drop" size={9} />Synfig Studio</button>
                    <button><Icon name="drop" size={9} />Synfig Studio</button>
                    <button><Icon name="drop" size={9} />*"Synfig Animation 1"...</button>
                </Tasks>
                <Language>EN <Icon name="restore" size={10} /></Language>
                <Tray>
                    <Icon name="back" size={11} />
                    <Icon name="device" size={12} />
                    <Icon name="person" size={12} />
                    <Icon name="quick" size={11} />
                    <Icon name="network" size={12} />
                    <time>10:38 AM</time>
                </Tray>
            </Taskbar>
        </Desktop>
    </>
)

export default App;
